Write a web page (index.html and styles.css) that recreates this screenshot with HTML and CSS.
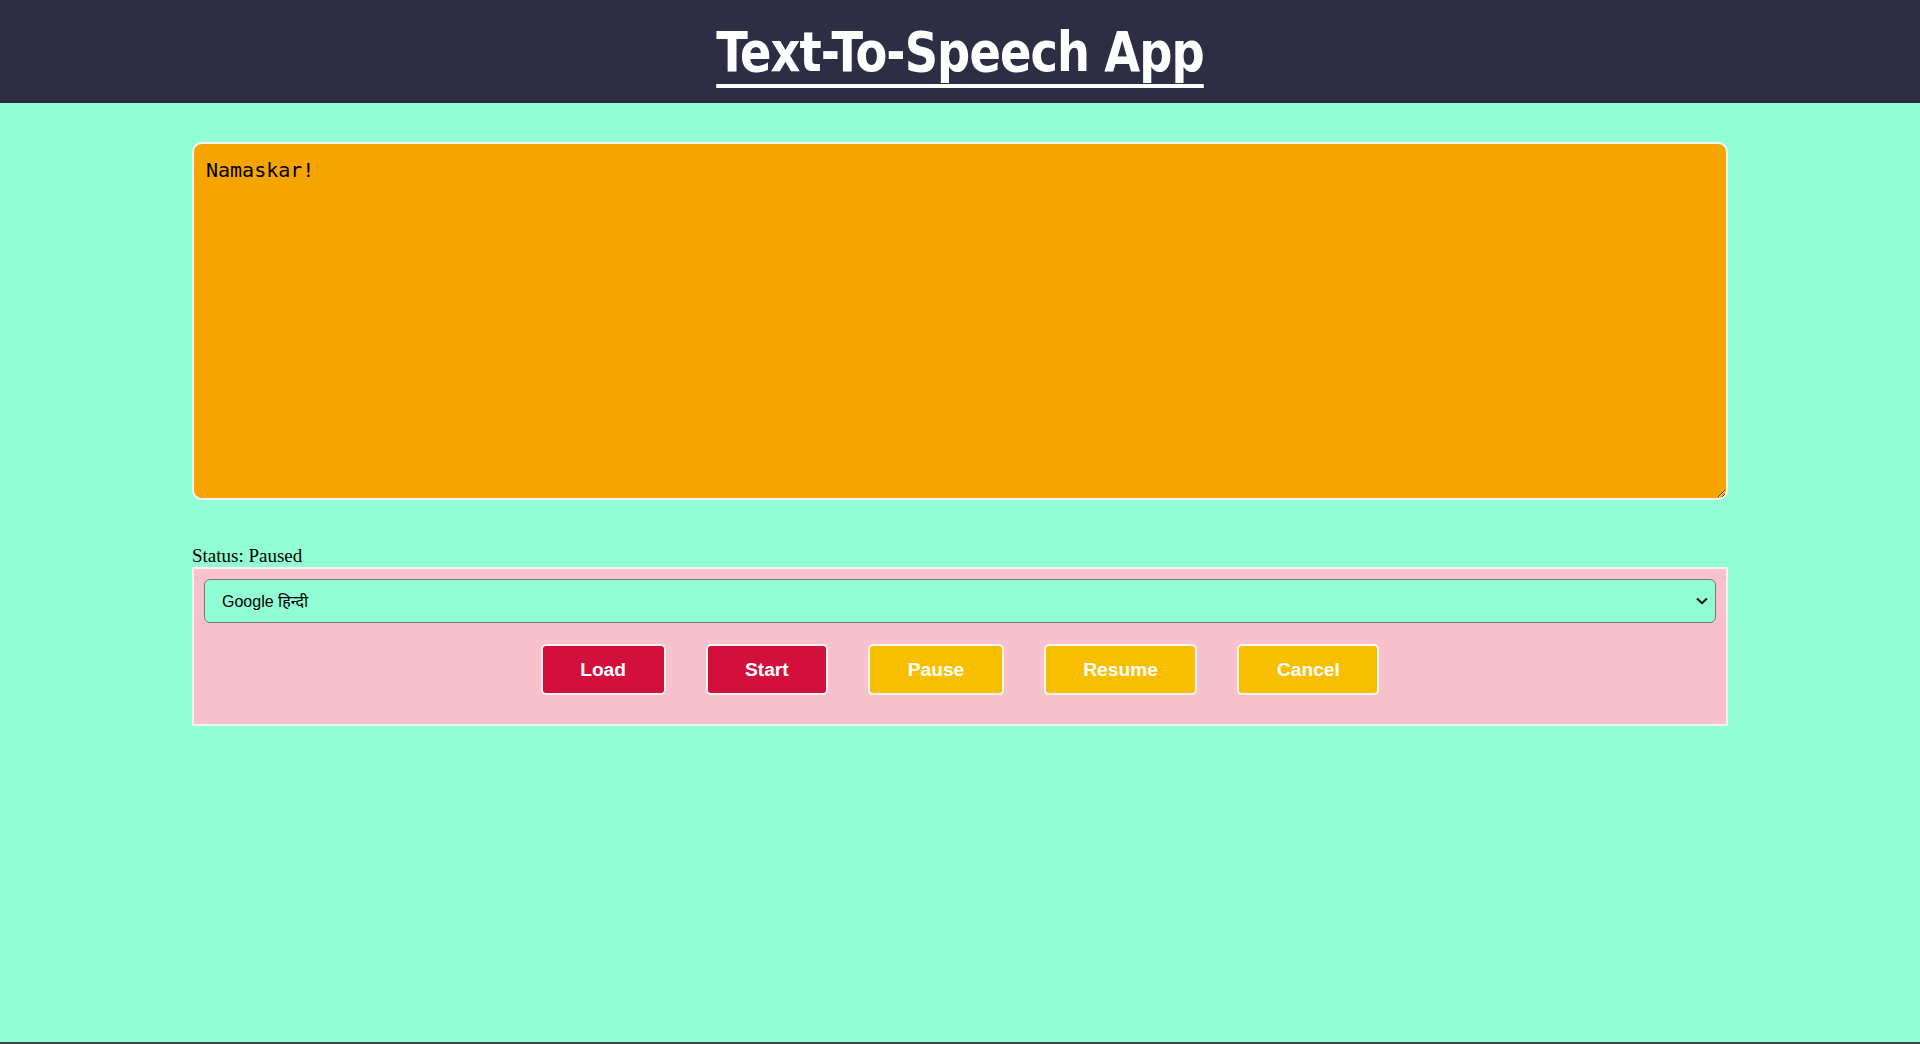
FILE: index.html
```html
<!DOCTYPE html>
<html lang="en">
<head>
<meta charset="utf-8">
<title>Text-To-Speech App</title>
<link rel="stylesheet" href="styles.css">
</head>
<body>
<header class="header">
  <h1 class="title">Text-To-Speech App</h1>
</header>
<main class="main">
  <textarea class="text-input">Namaskar!</textarea>
  <p class="status">Status: Paused</p>
  <div class="controls">
    <div class="select-wrap">
      <select class="voice-select">
        <option>Google हिन्दी</option>
      </select>
      <svg class="chevron" width="12" height="8" viewBox="0 0 12 8" aria-hidden="true">
        <path d="M1 1.5 L6 6.2 L11 1.5" fill="none" stroke="#111" stroke-width="2"/>
      </svg>
    </div>
    <div class="buttons">
      <button class="btn btn-red">Load</button>
      <button class="btn btn-red">Start</button>
      <button class="btn btn-yellow">Pause</button>
      <button class="btn btn-yellow">Resume</button>
      <button class="btn btn-yellow">Cancel</button>
    </div>
  </div>
</main>
<div class="bottom-bar"></div>
</body>
</html>
```
FILE: styles.css
```css
html, body {
  margin: 0;
  padding: 0;
}
body {
  background: #92fed6;
  min-height: 100vh;
  display: flex;
  flex-direction: column;
  font-family: "Liberation Serif", serif;
}
.header {
  background: #2d2e44;
  height: 103px;
  display: flex;
  justify-content: center;
  align-items: flex-start;
}
.title {
  display: inline-block;
  margin: 18px 0 0 0;
  color: #ffffff;
  font-family: "DejaVu Sans Condensed", "Liberation Sans", sans-serif;
  font-stretch: condensed;
  font-weight: bold;
  font-size: 56px;
  line-height: 68px;
  letter-spacing: -1px;
  transform: scaleX(0.92);
  text-decoration: underline;
  text-decoration-thickness: 4px;
  text-underline-offset: 13px;
  text-decoration-skip-ink: none;
}
.main {
  width: 80%;
  margin: 39px auto 0 auto;
  flex: 1;
}
.text-input {
  display: block;
  box-sizing: border-box;
  width: 100%;
  height: 358px;
  background: #f6a500;
  border: 2px solid #f4f4f4;
  border-radius: 10px;
  padding: 14px 12px 12px 12px;
  font-family: "DejaVu Sans Mono", "Liberation Mono", monospace;
  font-size: 20px;
  color: #000;
  outline: none;
}
.status {
  margin: 45px 0 0 0;
  font-size: 19px;
  line-height: 22px;
  color: #000;
}
.controls {
  background: #f8c1cb;
  border: 2px solid #f2f2f2;
  padding: 10px;
}
.select-wrap {
  position: relative;
}
.voice-select {
  display: block;
  box-sizing: border-box;
  width: 100%;
  height: 44px;
  background: #92fed6;
  border: 1px solid #767676;
  border-radius: 6px;
  padding: 0 17px;
  font-family: "Liberation Sans", "Noto Sans", sans-serif;
  font-size: 16px;
  color: #000;
  appearance: none;
  -webkit-appearance: none;
}
.chevron {
  position: absolute;
  right: 8px;
  top: 18px;
  pointer-events: none;
}
.buttons {
  display: flex;
  justify-content: center;
  gap: 40px;
  padding: 21px 0 19px 0;
}
.btn {
  font-family: "Liberation Sans", Arial, sans-serif;
  font-weight: bold;
  font-size: 19.2px;
  line-height: 22px;
  color: #ffffff;
  border: 2px solid #f3f3f3;
  border-radius: 5px;
  padding: 12.5px 37.5px;
  cursor: pointer;
}
.btn-red {
  background: #d30f3b;
}
.btn-yellow {
  background: #f8bf00;
}
.bottom-bar {
  height: 2px;
  background: #444444;
}
```
